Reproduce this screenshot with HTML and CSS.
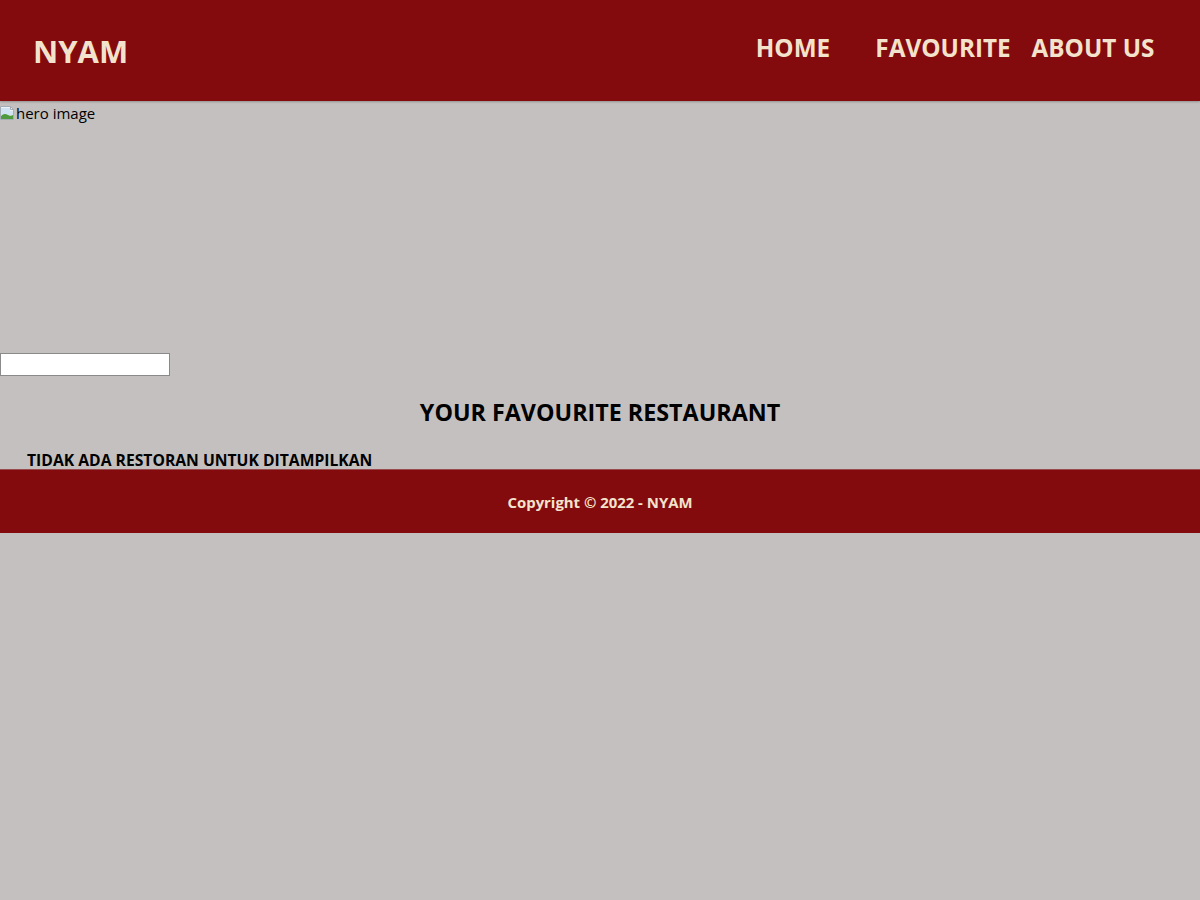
FILE: index.html
```html
<!DOCTYPE html>
<html lang="id">
<head>
<meta charset="utf-8">
<title>NYAM</title>
<link rel="stylesheet" href="styles.css">
</head>
<body>
<header class="app-bar">
  <h1 class="brand">NYAM</h1>
  <nav class="nav">
    <ul class="nav-list">
      <li class="nav-item"><a href="#" class="nav-link">HOME</a></li>
      <li class="nav-item"><a href="#" class="nav-link">FAVOURITE</a></li>
      <li class="nav-item"><a href="#" class="nav-link">ABOUT US</a></li>
    </ul>
  </nav>
</header>
<div class="hero">
  <span class="broken">
    <svg class="broken-icon" width="16" height="16" viewBox="0 0 16 16">
      <path d="M0.5 1.5h10l3 3v10h-13z" fill="#eef2f6" stroke="#a3abb4"/>
      <path d="M10.5 1.5v3h3" fill="none" stroke="#a3abb4"/>
      <path d="M1 3h9v3h3v4H1z" fill="#cfe3f2"/>
      <path d="M1 14v-3c2-2 4-3 7-1 2 1 3 1 5 0v4z" fill="#4f9a3c"/>
    </svg><span class="alt">hero image</span>
  </span>
</div>
<main class="content">
  <input class="search" type="text" aria-label="search">
  <h2 class="title">YOUR FAVOURITE RESTAURANT</h2>
  <p class="empty">TIDAK ADA RESTORAN UNTUK DITAMPILKAN</p>
</main>
<footer class="footer">
  <p class="copy">Copyright © 2022 - NYAM</p>
</footer>
</body>
</html>
```
FILE: styles.css
```css
* { box-sizing: border-box; }
html, body { margin: 0; padding: 0; }
body {
  background: #c4c0bf;
  font-family: "Open Sans", "Noto Sans", sans-serif;
  color: #000;
  min-height: 900px;
}
.app-bar {
  height: 101px;
  background: #830a0d;
  display: flex;
  align-items: center;
  justify-content: space-between;
  padding: 0 32px 0 33px;
  box-shadow: 0 1px 2px rgba(0,0,0,0.25);
  position: relative;
}
.brand {
  margin: 0;
  font-size: 31px;
  font-weight: 700;
  color: #f3e3cc;
  line-height: 1;
  position: relative;
  top: 1px;
}
.nav-list {
  display: flex;
  list-style: none;
  margin: 0;
  padding: 0;
}
.nav-item {
  width: 150px;
  text-align: center;
}
.nav-link {
  color: #f3e3cc;
  text-decoration: none;
  font-size: 24.3px;
  font-weight: 700;
  line-height: 1;
  display: inline-block;
  position: relative;
  top: -2px;
}
.hero {
  height: 252px;
  font-size: 15px;
}
.broken {
  display: inline-flex;
  align-items: center;
  height: 24px;
}
.broken-icon { display: block; }
.alt { font-family: "Open Sans", sans-serif; font-size: 15px; }
.content { display: flex; flex-direction: column; }
.search {
  width: 170px;
  height: 23px;
  margin: 0;
  border: 1px solid #8a8a8a;
  background: #fff;
  padding: 0;
}
.title {
  margin: 20px 0;
  text-align: center;
  font-size: 23.3px;
  font-weight: 700;
  line-height: 32px;
}
.empty {
  margin: 0;
  padding: 4px 0 0 27px;
  font-size: 15.7px;
  font-weight: 700;
  line-height: 17px;
}
.footer {
  height: 64px;
  background: #830a0d;
  display: flex;
  align-items: center;
  justify-content: center;
  border-top: 1px solid #9a4a4c;
}
.copy {
  margin: 0;
  color: #f3e3cc;
  font-size: 14.9px;
  font-weight: 700;
}
```
